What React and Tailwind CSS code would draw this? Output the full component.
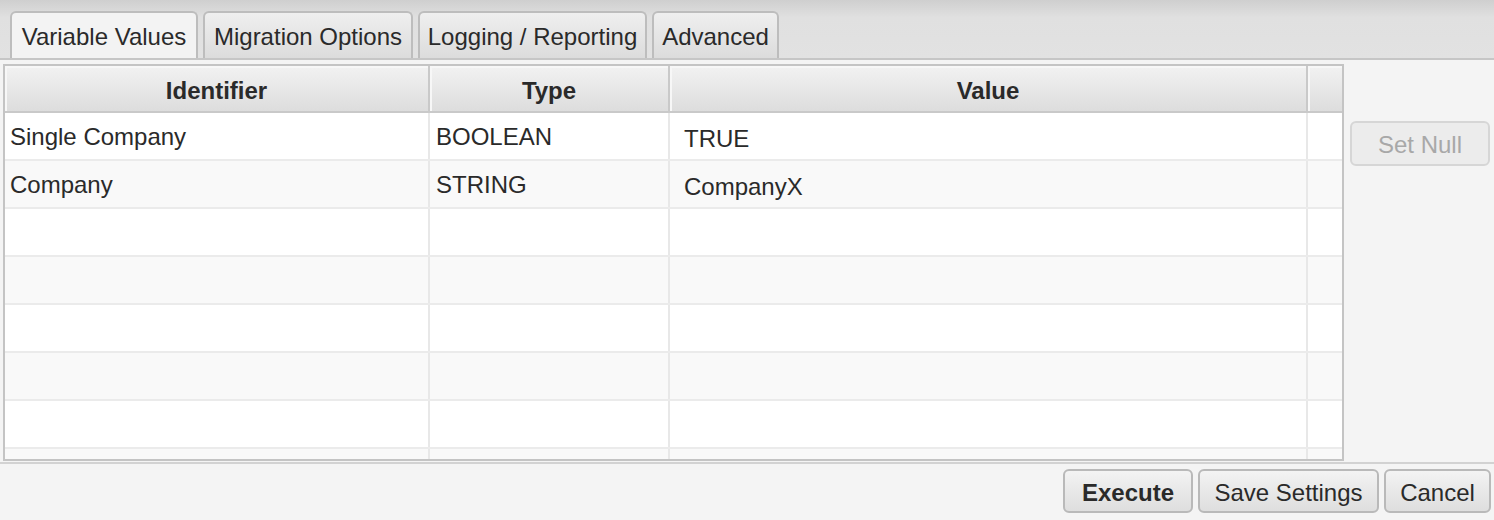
import React from "react";

const tabs = ["Variable Values", "Migration Options", "Logging / Reporting", "Advanced"];
const tabWidths = ["w-[188px]", "w-[210px]", "w-[229px]", "w-[127px]"];

const rows = [
  { id: "Single Company", type: "BOOLEAN", value: "TRUE" },
  { id: "Company", type: "STRING", value: "CompanyX" },
  {},
  {},
  {},
  {},
  {},
];

function Tab({ label, width, selected }) {
  return (
    <div
      className={`${width} h-[47px] flex items-center justify-center rounded-t-[6px] border-2 border-b-0 border-[#bdbdbd] ${
        selected ? "bg-[#f3f3f3]" : "bg-linear-to-b from-[#efefef] to-[#dcdcdc]"
      }`}
    >
      <span className="text-[24px] text-[#2a2a2a] leading-none pt-[3px]">{label}</span>
    </div>
  );
}

function HeaderCell({ children, className }) {
  return (
    <div
      className={`${className} h-full flex items-center justify-center border-r-2 border-[#c9c9c9] bg-linear-to-b from-[#f2f2f2] to-[#dddddd] shadow-[inset_2px_2px_0_#f7f7f7]`}
    >
      <span className="text-[24px] font-bold text-[#2a2a2a] leading-none pt-[4px]">{children}</span>
    </div>
  );
}

function Button({ children, className, bold }) {
  return (
    <button
      className={`${className} h-[44px] pt-[3px] rounded-[6px] border-2 border-[#b9b9b9] bg-linear-to-b from-[#f3f3f3] to-[#dedede] text-[24px] leading-none text-[#2a2a2a] ${
        bold ? "font-bold" : ""
      }`}
    >
      {children}
    </button>
  );
}

export default function App() {
  return (
    <div className="w-[1494px] h-[520px] bg-[#f4f4f4] flex flex-col overflow-hidden font-['Liberation_Sans',Arial,sans-serif]">
      {/* tab bar */}
      <div className="h-[60px] bg-linear-to-b from-[#cfcfcf] via-[#e0e0e0] via-30% to-[#e2e2e2] border-b-2 border-[#c6c6c6] flex items-end pl-[10px] gap-[5px]">
        {tabs.map((t, i) => (
          <Tab key={t} label={t} width={tabWidths[i]} selected={i === 0} />
        ))}
      </div>

      {/* content */}
      <div className="flex pt-[4px] pl-[3px] h-[402px]">
        <div className="w-[1341px] h-[397px] border-2 border-[#c4c4c4] bg-white flex flex-col overflow-hidden">
          <div className="h-[47px] flex border-b-2 border-[#c9c9c9] shrink-0">
            <HeaderCell className="w-[425px]">Identifier</HeaderCell>
            <HeaderCell className="w-[240px]">Type</HeaderCell>
            <HeaderCell className="w-[638px]">Value</HeaderCell>
            <div className="flex-1 h-full bg-linear-to-b from-[#f2f2f2] to-[#dddddd] shadow-[inset_2px_2px_0_#f7f7f7]" />
          </div>
          {[...rows, {}].map((r, i) => (
            <div
              key={i}
              className={`h-[48px] shrink-0 flex border-b-2 border-[#ebebeb] text-[24px] leading-none text-[#2a2a2a] ${
                i % 2 === 0 ? "bg-white" : "bg-[#f9f9f9]"
              }`}
            >
              <div className="w-[425px] h-full flex items-center pl-[5px] pt-[2px] border-r-2 border-[#e8e8e8]">{r.id}</div>
              <div className="w-[240px] h-full flex items-center pl-[6px] pt-[2px] border-r-2 border-[#e8e8e8]">{r.type}</div>
              <div className="w-[638px] h-full flex items-center pl-[14px] pt-[6px] border-r-2 border-[#e8e8e8]">{r.value}</div>
              <div className="flex-1" />
            </div>
          ))}
        </div>
        <div className="pl-[6px] pt-[57px]">
          <button className="w-[140px] h-[45px] pt-[3px] rounded-[6px] border-2 border-[#d6d6d6] bg-[#ececec] text-[24px] leading-none text-[#a8a8a8]">
            Set Null
          </button>
        </div>
      </div>

      {/* bottom bar */}
      <div className="flex-1 border-t-2 border-[#d2d2d2] flex justify-end items-start pt-[5px] pr-[3px] gap-[5px]">
        <Button className="w-[130px]" bold>Execute</Button>
        <Button className="w-[181px]">Save Settings</Button>
        <Button className="w-[107px]">Cancel</Button>
      </div>
    </div>
  );
}
